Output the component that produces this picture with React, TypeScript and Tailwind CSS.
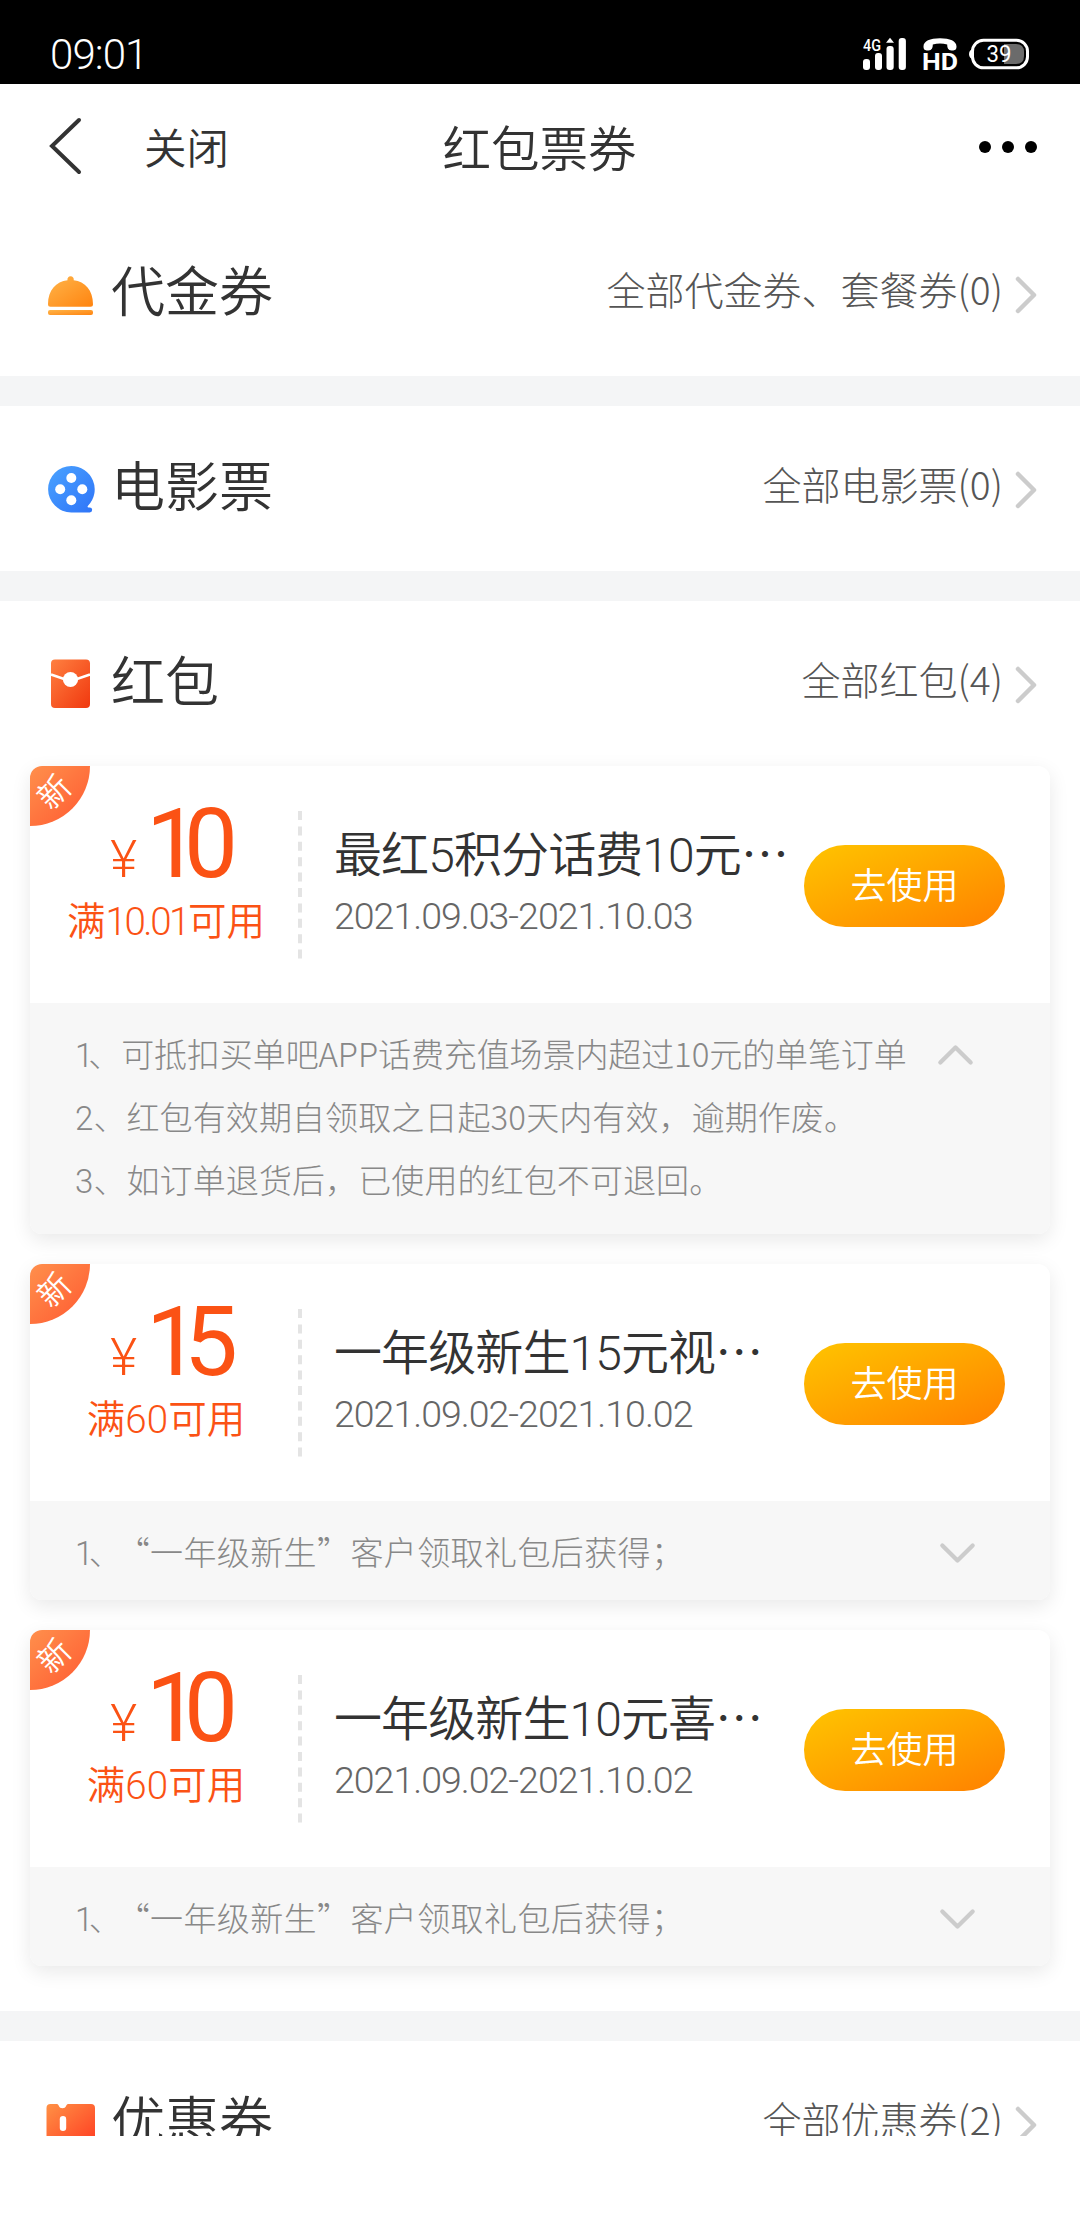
import React from "react";
import clsx from "clsx";

interface Coupon {
  amount: string;
  threshold: string;
  title: string;
  period: string;
  rules: string[];
  expanded?: boolean;
}

const coupons: Coupon[] = [
  {
    amount: "10",
    threshold: "10.01",
    title: "最红5积分话费10元",
    period: "2021.09.03-2021.10.03",
    rules: [
      "可抵扣买单吧APP话费充值场景内超过10元的单笔订单",
      "红包有效期自领取之日起30天内有效，逾期作废。",
      "如订单退货后，已使用的红包不可退回。",
    ],
    expanded: true,
  },
  {
    amount: "15",
    threshold: "60",
    title: "一年级新生15元视",
    period: "2021.09.02-2021.10.02",
    rules: ["“一年级新生”客户领取礼包后获得；"],
  },
  {
    amount: "10",
    threshold: "60",
    title: "一年级新生10元喜",
    period: "2021.09.02-2021.10.02",
    rules: ["“一年级新生”客户领取礼包后获得；"],
  },
];

const VoucherIcon = () => (
  <svg className="h-[49px] w-[49px]" viewBox="0 0 49 49">
    <defs>
      <linearGradient id="voucher" x1="0" y1="0" x2="1" y2="1">
        <stop offset="0" stopColor="#ffb54a" />
        <stop offset="1" stopColor="#ff8410" />
      </linearGradient>
    </defs>
    <path
      d="M21.5 11.2a3.2 3.2 0 1 1 6.2 0C39 12.5 47 21 47 35.2q0 2.5-2.5 2.5h-40q-2.5 0-2.5-2.500C2 21 10 12.500 21.500 11.200z"
      fill="url(#voucher)"
    />
    <rect x="2" y="41" width="45" height="5" rx="2" fill="url(#voucher)" />
  </svg>
);

const MovieIcon = () => (
  <svg className="h-[49px] w-[49px]" viewBox="0 0 49 49">
    <defs>
      <linearGradient id="movie" x1="0" y1="0" x2="1" y2="1">
        <stop offset="0" stopColor="#4aa3ff" />
        <stop offset="1" stopColor="#2f74f8" />
      </linearGradient>
    </defs>
    <path
      d="M25.300 2a23.400 23.400 0 0 1 16.500 40c-.5.8-.2 1.500.7 1.500h1.200a2.400 2.400 0 0 1 0 4.900H25.300a23.200 23.200 0 0 1 0-46.400z"
      fill="url(#movie)"
    />
    <circle cx="25.3" cy="14" r="5" fill="#fff" />
    <circle cx="14.2" cy="25.2" r="5" fill="#fff" />
    <circle cx="36.3" cy="25.2" r="5" fill="#fff" />
    <circle cx="25.3" cy="36.3" r="5" fill="#fff" />
  </svg>
);

const RedPacketIcon = () => (
  <svg className="h-[49px] w-[49px]" viewBox="0 0 49 49">
    <defs>
      <linearGradient id="packet" x1="0" y1="0" x2="1" y2="1">
        <stop offset="0" stopColor="#ff8040" />
        <stop offset="1" stopColor="#f0380f" />
      </linearGradient>
    </defs>
    <rect x="5" y="0.5" width="39" height="48.5" rx="4" fill="url(#packet)" />
    <path d="M5 15.5l13 4.500h13l13-4.500" fill="none" stroke="#fff" strokeWidth="2.6" />
    <circle cx="24.5" cy="20.5" r="7.6" fill="#fff" />
  </svg>
);

const CouponIcon = () => (
  <svg className="h-[49px] w-[49px]" viewBox="0 0 49 49">
    <defs>
      <linearGradient id="coupon" x1="0" y1="0" x2="1" y2="1">
        <stop offset="0" stopColor="#ff9145" />
        <stop offset="1" stopColor="#ff3d22" />
      </linearGradient>
    </defs>
    <path
      d="M4.5 5H11c2 0 1.5 4.300 5.500 4.300S20 5 22 5h23q4 0 4 4v32q0 4-4 4H4.500q-4 0-4-4V9q0-4 4-4z"
      fill="url(#coupon)"
    />
    <rect x="13.8" y="17" width="6.4" height="15" rx="3.2" fill="#fff" />
  </svg>
);

const Chevron = ({ className }: { className: string }) => (
  <svg
    className={className}
    viewBox="0 0 22 38"
    fill="none"
    stroke="#ccc"
    strokeWidth="4.5"
    strokeLinecap="round"
    strokeLinejoin="round"
  >
    <path d="M3 3l16 16L3 35" />
  </svg>
);

const StatusBar = () => (
  <div className="flex h-[84px] items-center justify-between bg-black pr-[50px] pl-[50px] text-white">
    <span className="pt-[26px] font-[Roboto] text-[42px] leading-none font-light tracking-[-0.9px]">09:01</span>
    <svg className="mt-6 h-[34px] w-[168px]" viewBox="0 0 168 34">
      {/* Señal */}
      <text
        className="font-[Roboto]"
        x="1"
        y="13.5"
        fontSize="17"
        fontWeight="500"
        fill="#fff"
        textLength="18"
        lengthAdjust="spacingAndGlyphs"
      >
        4G
      </text>
      <g fill="#fff">
        <rect x="1" y="22" width="7" height="11" rx="3" />
        <rect x="13" y="16" width="7" height="17" rx="3" />
        <rect x="24.5" y="9" width="7.2" height="24" rx="3" />
        <path d="M28 .8l4 5h-8z" />
        <rect x="36.7" y="1" width="7.2" height="32" rx="3" />
      </g>
      {/* Llamada HD */}
      <path
        d="M61.5 9.500C61.5 4 68 1.200 78 1.200S94.500 4 94.500 9.500c0 3.500-2 4.200-5 4-3.500-.4-4.200-2.400-4.300-6-4.500-1.300-10-1.300-14.400 0-.1 3.600-.8 5.600-4.300 6-3 .2-5-.5-5-4z"
        fill="#fff"
      />
      <text
        className="font-[Roboto]"
        x="60"
        y="33"
        fontSize="23.5"
        fontWeight="700"
        fill="#fff"
        textLength="36"
        lengthAdjust="spacingAndGlyphs"
      >
        HD
      </text>
      {/* Batería */}
      <path d="M112 11.5q-5 1-5 5.500t5 5.500z" fill="#fff" />
      <rect x="110.5" y="3.3" width="55" height="27.5" rx="11" fill="none" stroke="#fff" strokeWidth="3" />
      <path d="M142 7h12q8 0 8 8v4q0 8-8 8h-12z" fill="#6b6b6b" />
      <text
        className="font-[Roboto]"
        x="124.5"
        y="25"
        fontSize="23"
        fontWeight="400"
        fill="#fff"
        textLength="25"
        lengthAdjust="spacingAndGlyphs"
      >
        39
      </text>
    </svg>
  </div>
);

const NavBar = () => (
  <div className="flex h-[127px] items-start justify-between pt-[32px] pr-[43px] pl-[48px]">
    <div className="flex w-[236px] items-center">
      <svg className="h-[60px] w-[34px]" viewBox="0 0 34 60" fill="none" stroke="#333" strokeWidth="4">
        <path d="M31 4L4 30l27 26" strokeLinecap="round" />
      </svg>
      <span className="ml-[62px] text-[42.5px] leading-[58px] font-[350] text-[#333]">关闭</span>
    </div>
    <h1 className="text-[48.5px] leading-[60px] font-[350] text-[#333]">红包票券</h1>
    <div className="mt-px flex h-[60px] w-[242px] items-center justify-end gap-[11px]">
      <i className="h-3 w-3 rounded-full bg-black" />
      <i className="h-3 w-3 rounded-full bg-black" />
      <i className="h-3 w-3 rounded-full bg-black" />
    </div>
  </div>
);

interface SectionHeaderProps {
  icon: React.ReactNode;
  title: string;
  more: string;
}

const SectionHeader = ({ icon, title, more }: SectionHeaderProps) => (
  <div className="flex h-[165px] items-center pr-[43px] pl-[46px]">
    {icon}
    <h2 className="ml-4 flex-1 pb-[9px] text-[54px] leading-[64px] font-[350] whitespace-nowrap text-[#333]">
      {title}
    </h2>
    <span className="pb-[12px] text-[39px] leading-[48px] font-light whitespace-nowrap text-[#555]">{more}</span>
    <Chevron className="mt-[2px] ml-[12px] h-[38px] w-[22px]" />
  </div>
);

const CouponCard = ({ coupon }: { coupon: Coupon }) => (
  <div className="relative rounded-[12px] bg-white shadow-[0_6px_20px_rgba(0,0,0,0.09)]">
    {/* Etiqueta "nuevo" */}
    <div className="absolute top-0 left-0 flex h-[60px] w-[60px] rounded-tl-[12px] rounded-br-[60px] bg-gradient-to-br from-[#ff8f4c] to-[#ff5530]">
      <span className="mt-[9px] ml-[7px] h-[32px] w-[32px] -rotate-45 text-[32px] leading-[30px] font-[350] text-white">
        新
      </span>
    </div>

    <div className="flex h-[237px]">
      <div className="flex w-[272px] flex-col items-center pt-[30px] text-[#fb5214]">
        <div className="flex h-[96px] items-baseline font-[Roboto] leading-[96px]">
          <span className="mr-[9px] text-[52px] font-light">¥</span>
          <span className="text-[96px] tracking-[-16px]">{coupon.amount}</span>
        </div>
        <p className="mt-[7px] font-[Roboto,'Noto_Sans_CJK_SC',sans-serif] text-[38.5px] leading-[46px] font-[350] whitespace-nowrap">
          满
          <span className={clsx(coupon.threshold.includes("1") ? "tracking-[-2.4px]" : "tracking-[0.2px]")}>
            {coupon.threshold}
          </span>
          可用
        </p>
      </div>
      <svg className="-ml-1 mt-[44px] h-[150px] w-1" viewBox="0 0 4 150">
        <path d="M2 1v148" stroke="#e4e4e4" strokeWidth="4" strokeDasharray="9 6.4" />
      </svg>
      <div className="w-[502px] pt-[56px] pl-[32px]">
        <p className="font-[Roboto,'Noto_Sans_CJK_SC',sans-serif] text-[48px] leading-[58px] font-[350] tracking-[-0.9px] whitespace-nowrap text-[#333]">
          {coupon.title}
          <span className="font-['Noto_Sans_CJK_SC',sans-serif]">…</span>
        </p>
        <p className="mt-[9px] font-[Roboto] text-[37.5px] leading-[44px] font-light tracking-[-1px] whitespace-nowrap text-[#666]">
          {coupon.period}
        </p>
      </div>
      <button className="mt-[79px] h-[82px] w-[201px] rounded-full bg-gradient-to-br from-[#ffc400] to-[#ff8000] pb-[7px] text-[36px] leading-[44px] font-[350] text-white">
        去使用
      </button>
    </div>

    <div
      className={clsx(
        "flex justify-between rounded-b-[12px] bg-[#f7f7f7] pt-[19px] pl-[45px]",
        coupon.expanded ? "h-[231px] pr-[76px]" : "h-[99px] pr-[74px]"
      )}
    >
      <ul className="text-[33px] leading-[63px] font-light whitespace-nowrap text-[#888]">
        {coupon.rules.map((rule, index) => (
          <li
            key={rule}
            className={clsx(
              "h-[63px]",
              rule.startsWith("“") ? "tracking-[0.4px]" : index === 0 ? "tracking-[-0.1px]" : "tracking-[0.1px]"
            )}
          >
            <span className={clsx("font-[Roboto] leading-none", index === 0 && "-mr-[5px]")}>{index + 1}</span>
            <span className={clsx(rule.startsWith("“") && "mr-[11px]")}>、</span>
            {rule}
          </li>
        ))}
      </ul>
      <Chevron
        className={clsx("mt-[15px] mr-[8px] h-[36px] w-[21px]", coupon.expanded ? "-rotate-90" : "rotate-90")}
      />
    </div>
  </div>
);

const Divider = () => <div className="h-[30px] bg-[#f4f5f6]" />;

const App: React.FC = () => {
  return (
    <div
      lang="zh-CN"
      className="h-[2232px] w-[1080px] overflow-hidden bg-white font-['Noto_Sans_CJK_SC',sans-serif]"
    >
      <StatusBar />
      <NavBar />

      <main className="h-[1925px] overflow-hidden">
        <SectionHeader icon={<VoucherIcon />} title="代金券" more="全部代金券、套餐券(0)" />
        <Divider />
        <SectionHeader icon={<MovieIcon />} title="电影票" more="全部电影票(0)" />
        <Divider />

        <SectionHeader icon={<RedPacketIcon />} title="红包" more="全部红包(4)" />
        <div className="flex flex-col gap-[30px] px-[30px] pb-[45px]">
          {coupons.map((coupon) => (
            <CouponCard key={coupon.title} coupon={coupon} />
          ))}
        </div>
        <Divider />

        <SectionHeader icon={<CouponIcon />} title="优惠券" more="全部优惠券(2)" />
      </main>
    </div>
  );
};

export default App;
